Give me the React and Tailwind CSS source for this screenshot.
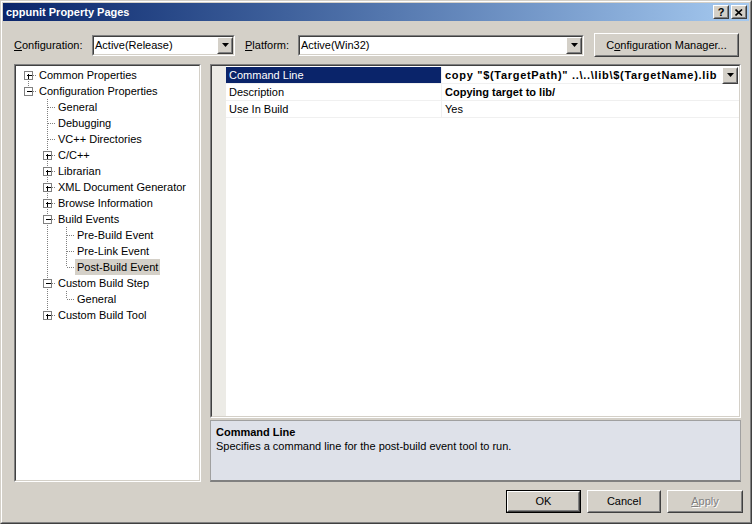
import React from "react";

// classic 3d borders
const sunkenOuter = "border border-t-[#808080] border-l-[#808080] border-b-white border-r-white";
const sunkenInner = "border border-t-[#404040] border-l-[#404040] border-b-[#d4d0c8] border-r-[#d4d0c8]";
const raisedOuter = "border border-t-white border-l-white border-b-[#404040] border-r-[#404040]";
const raisedInner = "border border-t-[#d4d0c8] border-l-[#d4d0c8] border-b-[#808080] border-r-[#808080]";

const tree = [
  { label: "Common Properties", level: 0, box: "plus", guides: [], hasNext: true, first: true },
  { label: "Configuration Properties", level: 0, box: "minus", guides: [], hasNext: false },
  { label: "General", level: 1, guides: [false], hasNext: true },
  { label: "Debugging", level: 1, guides: [false], hasNext: true },
  { label: "VC++ Directories", level: 1, guides: [false], hasNext: true },
  { label: "C/C++", level: 1, box: "plus", guides: [false], hasNext: true },
  { label: "Librarian", level: 1, box: "plus", guides: [false], hasNext: true },
  { label: "XML Document Generator", level: 1, box: "plus", guides: [false], hasNext: true },
  { label: "Browse Information", level: 1, box: "plus", guides: [false], hasNext: true },
  { label: "Build Events", level: 1, box: "minus", guides: [false], hasNext: true },
  { label: "Pre-Build Event", level: 2, guides: [false, true], hasNext: true },
  { label: "Pre-Link Event", level: 2, guides: [false, true], hasNext: true },
  { label: "Post-Build Event", level: 2, guides: [false, true], hasNext: false, selected: true },
  { label: "Custom Build Step", level: 1, box: "minus", guides: [false], hasNext: true },
  { label: "General", level: 2, guides: [false, true], hasNext: false },
  { label: "Custom Build Tool", level: 1, box: "plus", guides: [false], hasNext: false },
];

const dot = { stroke: "#808080", strokeWidth: 1, strokeDasharray: "1 1", shapeRendering: "crispEdges" };

// dotted connector lines + expander box for one tree row
const TreeLines = ({ level, guides, hasNext, first, box }) => {
  const w = 19 * (level + 1) - 1;
  const x0 = 19 * level;
  const cx = x0 + 9.5;
  return (
    <svg width={w} height="16" className="shrink-0">
      {guides.map((g, i) =>
        g ? <line key={i} x1={19 * i + 9.5} y1="0" x2={19 * i + 9.5} y2="16" {...dot} /> : null
      )}
      {!first && <line x1={cx} y1="0" x2={cx} y2="8" {...dot} />}
      {hasNext && <line x1={cx} y1="8" x2={cx} y2="16" {...dot} />}
      <line x1={cx} y1="8.5" x2={x0 + 18} y2="8.5" {...dot} />
      {box && (
        <g shapeRendering="crispEdges">
          <rect x={cx - 4} y="4.5" width="8" height="8" fill="white" stroke="#808080" />
          <line x1={cx - 2} y1="8.5" x2={cx + 3} y2="8.5" stroke="black" />
          {box === "plus" && <line x1={cx} y1="6.5" x2={cx} y2="11.5" stroke="black" />}
        </g>
      )}
    </svg>
  );
};

const Combo = ({ value, className }) => (
  <div className={`${sunkenOuter} h-[21px] ${className}`}>
    <div className={`${sunkenInner} h-full bg-white flex items-center`}>
      <span className="flex-1 pl-[1px] text-black">{value}</span>
      <DropButton />
    </div>
  </div>
);

const DropButton = () => (
  <div className={`${raisedOuter} w-[16px] h-[17px] bg-[#d4d0c8]`}>
    <div className={`${raisedInner} h-full flex items-center justify-center`}>
      <svg width="7" height="4" viewBox="0 0 7 4">
        <path d="M0 0h7L3.5 4z" fill="black" />
      </svg>
    </div>
  </div>
);

const Button = ({ children, className = "", isDefault, disabled }) => (
  <div className={`${isDefault ? "border border-black" : ""} ${className}`}>
    <div className={`${raisedOuter} h-full bg-[#d4d0c8]`}>
      <div className={`${raisedInner} h-full flex items-center justify-center`}>
        <span className={disabled ? "text-[#808080] [text-shadow:1px_1px_0_#fff]" : "text-black"}>
          {children}
        </span>
      </div>
    </div>
  </div>
);

const props = [
  { name: "Command Line", value: 'copy "$(TargetPath)" ..\\..\\lib\\$(TargetName).lib', bold: true, selected: true },
  { name: "Description", value: "Copying target to lib/", bold: true },
  { name: "Use In Build", value: "Yes" },
];

export default function App() {
  return (
    <div className="w-[752px] h-[524px] bg-[#d4d0c8] border border-t-[#d4d0c8] border-l-[#d4d0c8] border-b-[#404040] border-r-[#404040] font-['Tahoma','Liberation_Sans',sans-serif] text-[11px] leading-none overflow-hidden">
      <div className="h-full border border-t-white border-l-white border-b-[#808080] border-r-[#808080] p-[1px] flex flex-col">
        {/* Title bar */}
        <div className="h-[18px] bg-gradient-to-r from-[#0a246a] to-[#a6caf0] flex items-center pl-[3px] pr-[2px]">
          <span className="flex-1 text-white font-bold text-[11px]">cppunit Property Pages</span>
          <div className="flex gap-[2px]">
            <Button className="w-[16px] h-[14px]"><span className="font-bold text-[11px]">?</span></Button>
            <Button className="w-[16px] h-[14px]">
              <svg width="8" height="7" viewBox="0 0 8 7">
                <path d="M0.5 0.5L7 6.5M7 0.5L0.5 6.5" stroke="black" strokeWidth="1.6" />
              </svg>
            </Button>
          </div>
        </div>

        {/* Configuration row */}
        <div className="mt-[12px] h-[24px] flex items-center pl-[11px]">
          <span className="w-[78px]"><u>C</u>onfiguration:</span>
          <Combo value="Active(Release)" className="w-[143px]" />
          <span className="ml-[10px] w-[53px]"><u>P</u>latform:</span>
          <Combo value="Active(Win32)" className="w-[286px]" />
          <Button className="ml-[10px] w-[145px] h-[24px]">C<u>o</u>nfiguration Manager...</Button>
        </div>

        {/* Panels */}
        <div className="mt-[7px] h-[418px] flex pl-[11px]">
          {/* Tree */}
          <div className={`${sunkenOuter} w-[187px] h-full`}>
            <div className={`${sunkenInner} h-full bg-white pt-[1px] pl-[3px]`}>
              {tree.map((item, i) => (
                <div key={i} className="h-[16px] flex items-center">
                  <TreeLines {...item} />
                  <span className={`h-[16px] flex items-center px-[2px] ${item.selected ? "bg-[#d4d0c8]" : ""}`}>
                    {item.label}
                  </span>
                </div>
              ))}
            </div>
          </div>

          {/* Right side */}
          <div className="ml-[9px] w-[531px] flex flex-col">
            <div className={`${sunkenOuter} h-[354px]`}>
              <div className={`${sunkenInner} h-full bg-white flex`}>
                <div className="w-[14px] h-full bg-[#ecebe6]" />
                <div className="flex-1 flex flex-col pt-[1px]">
                  {props.map((p) => (
                    <div key={p.name} className="h-[17px] flex border-b border-[#f0f0f0]">
                      <div className={`w-[216px] flex items-center pl-[3px] border-r border-[#f0f0f0] ${p.selected ? "bg-[#0a246a] text-white" : "text-black"}`}>
                        {p.name}
                      </div>
                      <div className={`flex-1 flex items-center pl-[3px] ${p.bold ? "font-bold" : ""}`}>
                        <span className={`flex-1 ${p.selected ? "tracking-[0.7px]" : ""}`}>{p.value}</span>
                        {p.selected && (
                          <div className="mr-[1px]"><DropButton /></div>
                        )}
                      </div>
                    </div>
                  ))}
                </div>
              </div>
            </div>
            <div className="mt-[2px] h-[62px] bg-[#dee1e9] border border-[#a0a0a0] border-b-2 border-b-[#808080] px-[5px] pt-[6px]">
              <div className="font-bold">Command Line</div>
              <div className="mt-[3px]">Specifies a command line for the post-build event tool to run.</div>
            </div>
          </div>
        </div>

        {/* Buttons */}
        <div className="mt-[8px] h-[23px] flex justify-end pr-[6px] gap-[6px]">
          <Button isDefault className="w-[75px]">OK</Button>
          <Button className="w-[74px]">Cancel</Button>
          <Button disabled className="w-[76px]"><u>A</u>pply</Button>
        </div>
      </div>
    </div>
  );
}
